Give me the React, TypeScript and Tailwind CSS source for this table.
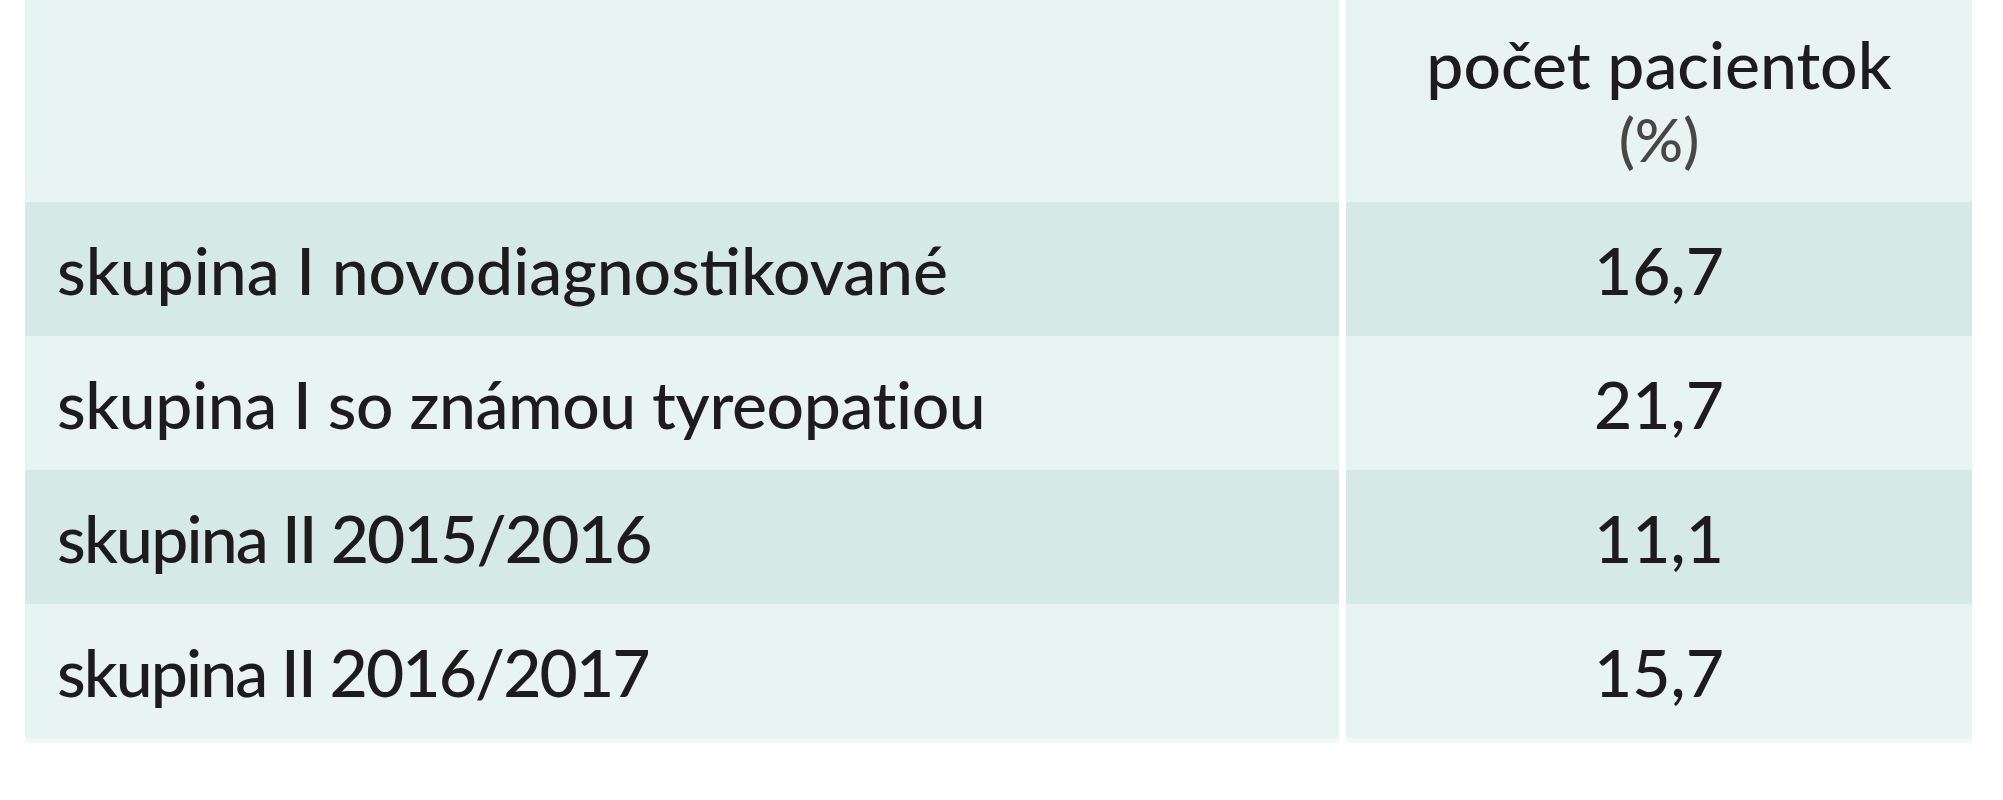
const rows = [
  { label: 'skupina I novodiagnostikované', value: '16,7', shade: true, track: 'tracking-normal' },
  { label: 'skupina I so známou tyreopatiou', value: '21,7', shade: false, track: 'tracking-[-0.4px]' },
  { label: 'skupina II 2015/2016', value: '11,1', shade: true, track: 'tracking-[-1.8px]' },
  { label: 'skupina II 2016/2017', value: '15,7', shade: false, track: 'tracking-[-1.9px]' },
]

export default function App() {
  return (
    <div className="h-[800px] w-[2003px] bg-white font-['Lato',sans-serif] font-medium text-[#1f1b1c]">
      <div className="ml-[25px] w-[1947px]">
        {/* Header */}
        <div className="flex h-[202px]">
          <div className="w-[1314px] bg-[#e7f4f2]" />
          <div className="w-[7px] bg-white" />
          <div className="flex flex-1 flex-col items-center bg-[#e7f4f2] pt-[24px]">
            <p className="text-[66px] leading-[79px]">počet pacientok</p>
            <p className="text-[60px] leading-[72px] text-[#4a4646]">(%)</p>
          </div>
        </div>

        {/* Body rows */}
        {rows.map((r) => (
          <div key={r.label} className="flex h-[134px]">
            <div
              className={`flex w-[1314px] items-center pl-[32px] text-[66px] ${r.track} ${r.shade ? 'bg-[#d5e9e7]' : 'bg-[#e7f4f2]'}`}
            >
              {r.label}
            </div>
            <div className="w-[7px] bg-white" />
            <div
              className={`flex flex-1 items-center justify-center text-[66px] ${r.shade ? 'bg-[#d5e9e7]' : 'bg-[#e7f4f2]'}`}
            >
              {r.value}
            </div>
          </div>
        ))}
        <div className="flex h-[5px]">
          <div className="w-[1314px] bg-[#f1f9f7]" />
          <div className="w-[7px] bg-white" />
          <div className="flex-1 bg-[#f1f9f7]" />
        </div>
      </div>
    </div>
  )
}
